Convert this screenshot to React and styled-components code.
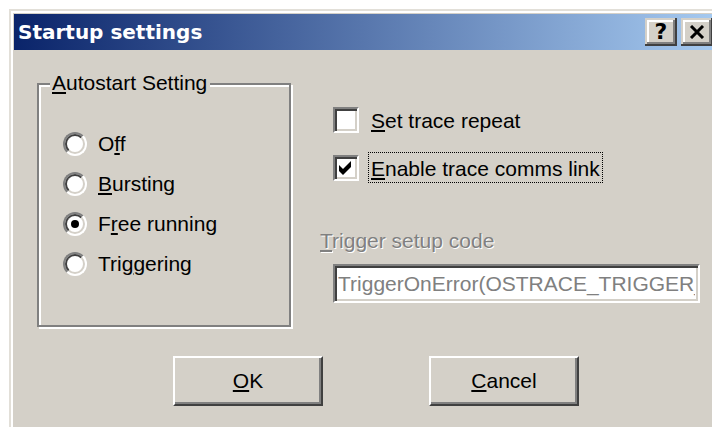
import styled, { createGlobalStyle, css } from "styled-components";

const face = "#d4d0c8";

const GlobalStyle = createGlobalStyle`
  html, body {
    margin: 0;
    padding: 0;
    background: #fff;
    overflow: hidden;
  }
  body {
    width: 712px;
    height: 427px;
  }
`;

const Window = styled.div`
  margin: 9px 0 0 9px;
  width: 716px;
  height: 430px;
  box-sizing: border-box;
  background: ${face};
  border-top: 2px solid #e2dfd8;
  border-left: 2px solid #e2dfd8;
  box-shadow: inset 2px 2px 0 #fff;
  padding: 3px 8px 0 3px;
`;

const TitleBar = styled.div`
  height: 36px;
  display: flex;
  align-items: center;
  padding: 0 4px;
  background: linear-gradient(to right, #0a246a, #a6caf0);
  color: #fff;
  font: bold 20px "DejaVu Sans", Verdana, sans-serif;
`;

const Title = styled.span`
  flex: 1;
  white-space: nowrap;
`;

const CaptionButton = styled.button`
  width: 32px;
  height: 28px;
  margin-left: ${(p) => (p.$gap ? "4px" : "0")};
  padding: 0;
  border: none;
  background: ${face};
  box-shadow: inset -2px -2px 0 #404040, inset 2px 2px 0 ${face},
    inset -4px -4px 0 #808080, inset 4px 4px 0 #fff;
  display: flex;
  align-items: center;
  justify-content: center;
  color: #000;
  font: bold 22px "DejaVu Sans", sans-serif;
  line-height: 1;
`;

const Client = styled.div`
  padding: 33px 0 0 23px;
  font: 21px "Liberation Sans", Arial, sans-serif;
  color: #000;
`;

const TopRow = styled.div`
  display: flex;
  gap: 29px;
`;

const GroupBox = styled.div`
  position: relative;
  width: 254px;
  height: 244px;
  box-sizing: border-box;
  border: 2px solid #808080;
  box-shadow: inset 2px 2px 0 #fff, 2px 2px 0 #fff;
  padding: 47px 0 0 24px;
  display: flex;
  flex-direction: column;
  gap: 16px;
`;

const Legend = styled.span`
  position: absolute;
  top: -14px;
  left: 11px;
  padding: 0 3px 0 2px;
  background: ${face};
  line-height: 24px;
`;

const RadioRow = styled.label`
  display: flex;
  align-items: center;
  gap: 11px;
  height: 24px;
  line-height: 24px;
`;

const RadioCircle = styled.span`
  position: relative;
  flex: none;
  box-sizing: border-box;
  width: 24px;
  height: 24px;
  border-radius: 50%;
  border: 2px solid;
  border-color: #808080 #fff #fff #808080;
  background: #fff;

  &::before {
    content: "";
    position: absolute;
    inset: 0;
    box-sizing: border-box;
    border-radius: 50%;
    border: 2px solid;
    border-color: #404040 ${face} ${face} #404040;
  }

  ${(p) =>
    p.$checked &&
    css`
      &::after {
        content: "";
        position: absolute;
        left: 6px;
        top: 6px;
        width: 8px;
        height: 8px;
        border-radius: 50%;
        background: #000;
      }
    `}
`;

const Key = styled.u`
  text-decoration-thickness: 2px;
  text-underline-offset: 2px;
`;

const RightColumn = styled.div`
  padding-top: 21px;
  display: flex;
  flex-direction: column;
`;

const CheckRow = styled.label`
  display: flex;
  align-items: center;
  gap: 9px;
  margin-left: 13px;
  margin-bottom: 17px;
`;

const CheckBox = styled.span`
  flex: none;
  box-sizing: border-box;
  width: 26px;
  height: 26px;
  border: 2px solid;
  border-color: #808080 #fff #fff #808080;
  box-shadow: inset 2px 2px 0 #404040, inset -2px -2px 0 ${face};
  background: #fff;
  display: flex;
  align-items: center;
  justify-content: center;
`;

const CheckText = styled.span`
  padding: 3px 2px 1px;
  line-height: 25px;
  border: 1px dotted ${(p) => (p.$focused ? "#000" : "transparent")};
  white-space: nowrap;
`;

const FieldLabel = styled.div`
  margin-top: 29px;
  line-height: 24px;
  color: #808080;
  text-shadow: 1px 1px 0 #fff;
`;

const TextField = styled.input`
  margin: 11px 0 0 13px;
  width: 367px;
  height: 39px;
  box-sizing: border-box;
  padding: 0 3px;
  border: 2px solid;
  border-color: #808080 #fff #fff #808080;
  box-shadow: inset 2px 2px 0 #404040, inset -2px -2px 0 ${face};
  background: #fff;
  color: #808080;
  -webkit-text-fill-color: #808080;
  opacity: 1;
  font: 21px "Liberation Sans", Arial, sans-serif;
  outline: none;
`;

const ButtonRow = styled.div`
  display: flex;
  gap: 106px;
  margin: 29px 0 0 136px;
`;

const PushButton = styled.button`
  width: 150px;
  height: 50px;
  padding: 0;
  border: 2px solid;
  border-color: #fff #404040 #404040 #fff;
  box-shadow: inset -2px -2px 0 #808080;
  background: ${face};
  color: #000;
  font: 21px "Liberation Sans", Arial, sans-serif;
`;

const CheckMark = () => (
  <svg width="22" height="22" viewBox="0 0 22 22">
    <polygon points="4,8 8,12 16,4 16,10 8,18 4,14" fill="#000" />
  </svg>
);

const CloseGlyph = () => (
  <svg width="16" height="14" viewBox="0 0 16 14">
    <path d="M2 1 L14 13 M14 1 L2 13" stroke="#000" strokeWidth="3" />
  </svg>
);

const modes = [
  { key: "off", label: <>O<Key>f</Key>f</> },
  { key: "burst", label: <><Key>B</Key>ursting</> },
  { key: "free", label: <>F<Key>r</Key>ee running</>, checked: true },
  { key: "trig", label: <>Tri<Key>g</Key>gering</> },
];

export default function App() {
  return (
    <>
      <GlobalStyle />
      <Window>
        <TitleBar>
          <Title>Startup settings</Title>
          <CaptionButton>?</CaptionButton>
          <CaptionButton $gap>
            <CloseGlyph />
          </CaptionButton>
        </TitleBar>
        <Client>
          <TopRow>
            <GroupBox>
              <Legend>
                <Key>A</Key>utostart Setting
              </Legend>
              {modes.map((m) => (
                <RadioRow key={m.key}>
                  <RadioCircle $checked={m.checked} />
                  <span>{m.label}</span>
                </RadioRow>
              ))}
            </GroupBox>
            <RightColumn>
              <CheckRow>
                <CheckBox />
                <CheckText>
                  <Key>S</Key>et trace repeat
                </CheckText>
              </CheckRow>
              <CheckRow>
                <CheckBox>
                  <CheckMark />
                </CheckBox>
                <CheckText $focused>
                  <Key>E</Key>nable trace comms link
                </CheckText>
              </CheckRow>
              <FieldLabel>
                <Key>T</Key>rigger setup code
              </FieldLabel>
              <TextField
                disabled
                readOnly
                value="TriggerOnError(OSTRACE_TRIGGER_ALL)"
              />
            </RightColumn>
          </TopRow>
          <ButtonRow>
            <PushButton>
              <Key>O</Key>K
            </PushButton>
            <PushButton>
              <Key>C</Key>ancel
            </PushButton>
          </ButtonRow>
        </Client>
      </Window>
    </>
  );
}
